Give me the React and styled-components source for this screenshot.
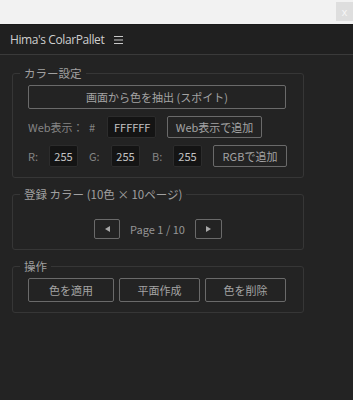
import styled, { createGlobalStyle } from "styled-components";

const GlobalStyle = createGlobalStyle`
  html, body {
    margin: 0;
    padding: 0;
    background: #232323;
  }
  * {
    box-sizing: border-box;
  }
`;

const FONT = `"Noto Sans CJK JP", "Noto Sans", sans-serif`;

export default function App() {
  return (
    <>
      <GlobalStyle />
      <Page>
        <TopBar>
          <CloseBox>x</CloseBox>
        </TopBar>
        <Header>
          <Title>Hima's ColarPallet</Title>
          <svg width="9" height="8" viewBox="0 0 9 8">
            <path d="M0 0.5H9M0 4H9M0 7.5H9" stroke="#c8c8c8" strokeWidth="1" />
          </svg>
        </Header>

        <Content>
          <Group>
            <Legend>カラー設定</Legend>
            <Stack>
              <Button $w={258} $h={24}>画面から色を抽出 (スポイト)</Button>
              <Row $h={22}>
                <Label $w={61}>Web表示：</Label>
                <Label $w={18}>#</Label>
                <Input $w={49} $left defaultValue="FFFFFF" />
                <Button $w={95} $h={22} $ml={11}>Web表示で追加</Button>
              </Row>
              <Row $h={22}>
                <Label $w={21}>R:</Label>
                <Input $w={29} defaultValue="255" />
                <Label $w={22} $ml={11}>G:</Label>
                <Input $w={29} defaultValue="255" />
                <Label $w={21} $ml={12}>B:</Label>
                <Input $w={29} defaultValue="255" />
                <Button $w={74} $h={22} $ml={11}>RGBで追加</Button>
              </Row>
            </Stack>
          </Group>

          <Group $pt={18}>
            <Legend>登録 カラー (10色 × 10ページ)</Legend>
            <Pager>
              <Button $w={26} $h={20}>
                <svg width="5" height="6" viewBox="0 0 5 6">
                  <path d="M5 0V6L0 3Z" fill="#a8a8a8" />
                </svg>
              </Button>
              <PageText>Page 1 / 10</PageText>
              <Button $w={27} $h={20}>
                <svg width="5" height="6" viewBox="0 0 5 6">
                  <path d="M0 0V6L5 3Z" fill="#a8a8a8" />
                </svg>
              </Button>
            </Pager>
          </Group>

          <Group>
            <Legend>操作</Legend>
            <Row $h={24} $gap={5}>
              <Button $w={86} $h={24}>色を適用</Button>
              <Button $w={81} $h={24}>平面作成</Button>
              <Button $w={81} $h={24}>色を削除</Button>
            </Row>
          </Group>
        </Content>
      </Page>
    </>
  );
}

const Page = styled.div`
  width: 353px;
  height: 400px;
  background: #232323;
  font-family: ${FONT};
  overflow: hidden;
`;

const TopBar = styled.div`
  height: 25px;
  background: #f2f2f2;
  display: flex;
  justify-content: flex-end;
  align-items: flex-start;
  padding-top: 2px;
  border-bottom: 1px solid #1a1a1a;
`;

const CloseBox = styled.div`
  width: 17px;
  height: 19px;
  background: #dedede;
  color: #f6f6f6;
  font-family: "Liberation Sans", sans-serif;
  font-size: 11px;
  display: flex;
  align-items: center;
  justify-content: center;
`;

const Header = styled.div`
  height: 30px;
  background: #202020;
  border-bottom: 1px solid #3a3a3a;
  display: flex;
  align-items: center;
  gap: 10px;
  padding-left: 10px;
`;

const Title = styled.span`
  color: #cfcfcf;
  font-family: "Open Sans", "Noto Sans", sans-serif;
  font-size: 12px;
  letter-spacing: -0.4px;
`;

const Content = styled.div`
  padding: 11px 0 0 12px;
  display: flex;
  flex-direction: column;
  gap: 9px;
`;

const Group = styled.fieldset`
  width: 292px;
  margin: 0;
  border: 1px solid #363636;
  border-radius: 3px;
  padding: ${(p) => p.$pt ?? 5}px 15px 10px 15px;
`;

const Legend = styled.legend`
  margin-left: -8px;
  padding: 0 4px;
  color: #a0a0a0;
  font-size: 11.5px;
  line-height: 14px;
`;

const Stack = styled.div`
  display: flex;
  flex-direction: column;
  gap: 7px;
`;

const Row = styled.div`
  display: flex;
  align-items: center;
  height: ${(p) => p.$h}px;
  gap: ${(p) => p.$gap ?? 0}px;
`;

const Label = styled.span`
  width: ${(p) => p.$w}px;
  margin-left: ${(p) => p.$ml ?? 0}px;
  flex: none;
  color: #858585;
  font-size: 11px;
`;

const Input = styled.input`
  width: ${(p) => p.$w}px;
  height: 22px;
  flex: none;
  background: #141414;
  border: 1px solid #2c2c2c;
  border-radius: 2px;
  color: #c4c4c4;
  font-family: ${FONT};
  font-size: 11px;
  padding: ${(p) => (p.$left ? "0 0 0 6px" : "0")};
  text-align: ${(p) => (p.$left ? "left" : "center")};
  outline: none;
`;

const Button = styled.button`
  width: ${(p) => p.$w}px;
  height: ${(p) => p.$h}px;
  margin-left: ${(p) => p.$ml ?? 0}px;
  flex: none;
  background: #232323;
  border: 1px solid #6a6a6a;
  border-radius: 2px;
  color: #a4a4a4;
  font-family: ${FONT};
  font-size: 11px;
  padding: 0;
  display: flex;
  align-items: center;
  justify-content: center;
  white-space: nowrap;
`;

const Pager = styled.div`
  display: flex;
  align-items: center;
  justify-content: center;
  gap: 10px;
  height: 20px;
`;

const PageText = styled.span`
  color: #959595;
  font-size: 11px;
`;
